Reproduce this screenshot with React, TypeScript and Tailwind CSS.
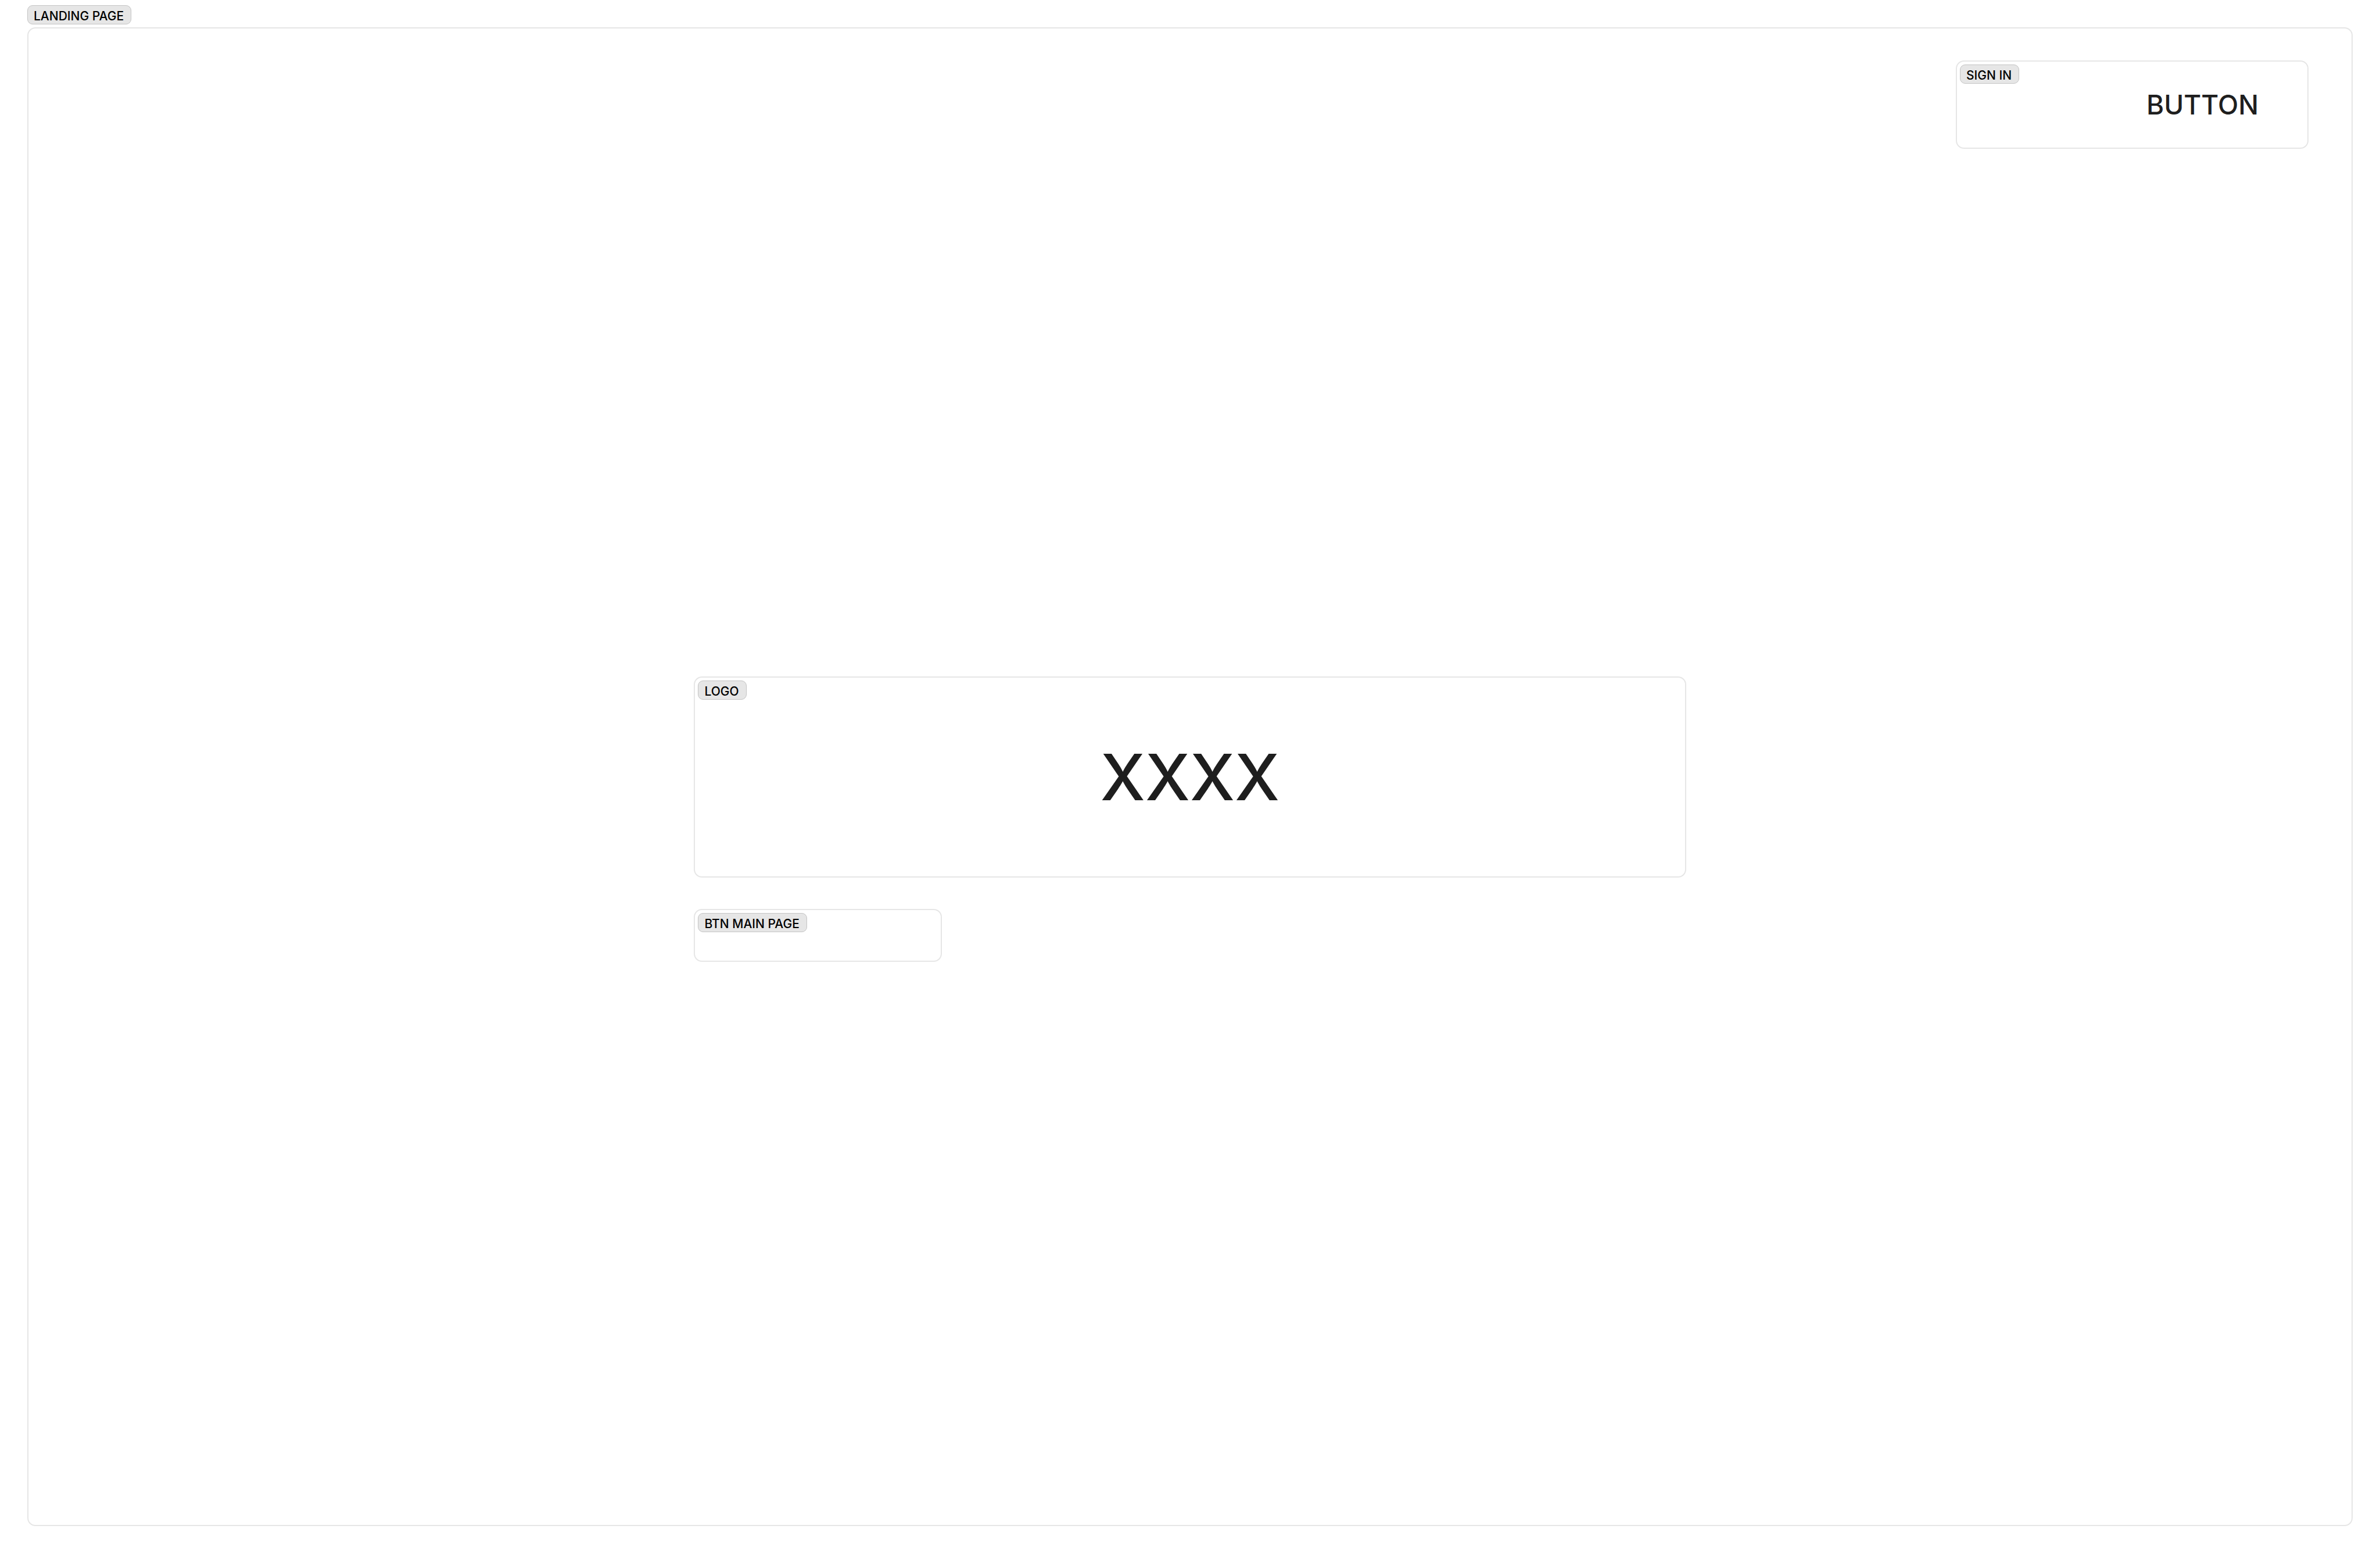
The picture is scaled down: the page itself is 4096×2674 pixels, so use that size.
import type { ReactNode } from "react";

function Tag({ children }: { children: ReactNode }) {
  return (
    <span className="inline-flex h-[33px] items-center whitespace-nowrap rounded-[9px] border border-[#c4c4c4] bg-[#e6e6e6] pt-[4px] pr-[12px] pl-[10px] text-[21px] leading-[27px] font-medium text-black">
      {children}
    </span>
  );
}

const frame = "rounded-[14px] border-2 border-[#e6e6e6] bg-white";

export default function App() {
  return (
    <div className="flex min-h-screen flex-col gap-[5px] bg-white px-[47px] pt-[9px] pb-[48px] font-['Inter',sans-serif]">
      <h1 className="flex">
        <Tag>LANDING PAGE</Tag>
      </h1>

      <main className={`grid grow grid-rows-[1fr_auto_1fr] ${frame}`}>
        <header className="flex items-start justify-end px-[74px] pt-[55px] pb-[38px]">
          <section
            aria-labelledby="sign-in"
            className={`relative flex w-[607px] max-w-full items-center justify-end px-[84px] py-[44px] ${frame}`}
          >
            <h2 id="sign-in" className="absolute top-[5px] left-[5px] flex">
              <Tag>SIGN IN</Tag>
            </h2>
            <button type="button" className="text-[46px] leading-[60px] font-medium text-[#1e1e1e]">
              BUTTON
            </button>
          </section>
        </header>

        <section
          aria-labelledby="logo"
          className={`relative flex w-[42.7%] items-center justify-center justify-self-center py-[102px] ${frame}`}
        >
          <h2 id="logo" className="absolute top-[5px] left-[5px] flex">
            <Tag>LOGO</Tag>
          </h2>
          <p className="text-[110px] leading-[138px] font-medium text-[#1e1e1e]">XXXX</p>
        </section>

        <div className="flex w-[42.7%] items-start justify-self-center pt-[54px]">
          <button type="button" className={`flex w-1/4 items-start px-[5px] pt-[5px] pb-[49px] ${frame}`}>
            <Tag>BTN MAIN PAGE</Tag>
          </button>
        </div>
      </main>
    </div>
  );
}
